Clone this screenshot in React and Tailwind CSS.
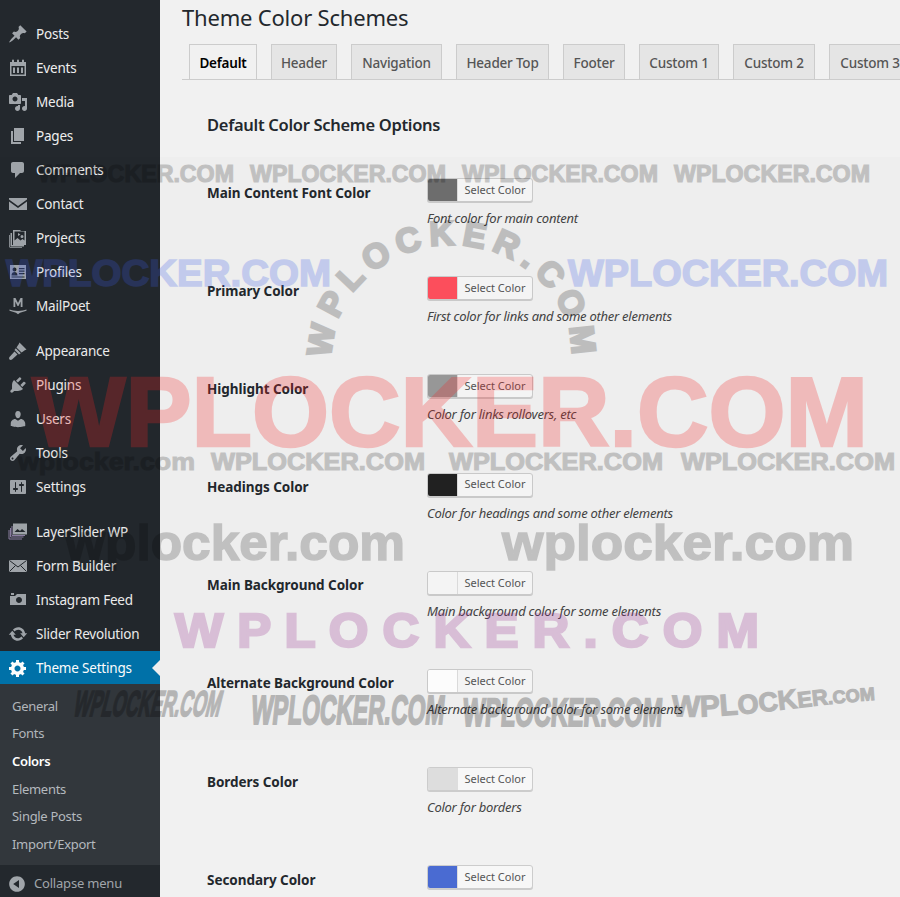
import React from "react";

const font = "font-['Noto_Sans','Open_Sans',sans-serif]";

const Icon = ({ children, className = "" }) => (
  <svg viewBox="0 0 20 20" className={`w-5 h-5 fill-current ${className}`}>
    {children}
  </svg>
);

const icons = {
  pin: <path d="M10.44 3.02l1.82-1.82 6.36 6.35-1.83 1.82c-1.05-.68-2.48-.57-3.41.36l-.75.75c-.92.93-1.04 2.35-.35 3.41l-1.83 1.82-2.41-2.41-2.8 2.79c-.42.42-3.38 2.71-3.8 2.29s1.86-3.39 2.28-3.81l2.79-2.79L4.1 9.36l1.83-1.82c1.05.69 2.48.57 3.4-.36l.75-.75c.93-.92 1.05-2.35.36-3.41z" />,
  calendar: (
    <path
      fillRule="evenodd"
      d="M2 4h2V2.500a1 1 0 0 1 2 0V4h3V2.500a1 1 0 0 1 2 0V4h3V2.500a1 1 0 0 1 2 0V4h2v14H2zm1.500 4v8.500h13V8zM5 9.500h2v5.500H5zm4 0h2v5.500H9zm4 0h2v5.500h-2z"
    />
  ),
  media: <path d="M13 11V4c0-.55-.45-1-1-1h-1.67L9 1H5L3.67 3H2c-.55 0-1 .45-1 1v7c0 .55.45 1 1 1h10c.55 0 1-.45 1-1zM7 4.5c1.38 0 2.5 1.12 2.5 2.5S8.38 9.5 7 9.5 4.5 8.38 4.5 7 5.62 4.5 7 4.5zM14 6h5v10.5c0 1.38-1.12 2.5-2.5 2.5S14 17.88 14 16.5s1.12-2.5 2.5-2.5c.17 0 .34.02.5.05V9h-3V6zm-4 8.05V13h2v3.5c0 1.38-1.12 2.5-2.5 2.5S7 17.88 7 16.5 8.12 14 9.5 14c.17 0 .34.02.5.05z" />,
  page: <path d="M6 15V2h10v13H6zm-1 1h8v2H3V5h2v11z" />,
  comment: <path d="M5 2h9c1.1 0 2 .9 2 2v7c0 1.1-.9 2-2 2h-2l-5 5v-5H5c-1.1 0-2-.9-2-2V4c0-1.1.9-2 2-2z" />,
  mail: <path d="M1 4h18v1.600L10 12 1 5.600zM1 7.600l9 6.400 9-6.400V16H1z" />,
  projects: (
    <path
      fillRule="evenodd"
      d="M5 2h7l1 1h5v14H5zm1.500 1.500v9l3-2.500 3 2.500 2-1.500 2 1.500v-9zM10 5l2.500 1.500L10 8zm4 2a1.500 1.500 0 1 1 0 3 1.500 1.500 0 0 1 0-3zM2.500 5H4v12h12v1.500H2.500zM1 7h.8v13H14v-.8H1z"
    />
  ),
  profile: (
    <path
      fillRule="evenodd"
      d="M2 3h16v14H2zm4.500 2.500a2 2 0 1 0 0 4 2 2 0 0 0 0-4zM3.500 13.500c0-2.500 1.500-3.500 3-3.500s3 1 3 3.500zM11 6v1.200h5.500V6zm0 2.500v1.200h5.500V8.500zM11 11v1.200h5.500V11zm-7.500 3.500v1h13v-1z"
    />
  ),
  mailpoet: (
    <>
      <path d="M5.500 2h2l2.500 5 2.500-5h2v9h-1.800V5.500L10.500 10h-1L7.300 5.500V11H5.500z" />
      <path d="M1.500 13.500c2 .6 5 1.500 8.500 1.500s6.500-.9 8.500-1.500v1.300l-6.500 2-2 1.500-2-1.500-6.500-2z" />
    </>
  ),
  brush: (
    <>
      <path d="M11.500 1.500L18.500 8.500C16 9.500 14.500 11 13.500 11.500L8.500 6.500C9 5.500 10.500 4 11.500 1.500z" />
      <path d="M7.800 7.200L12.800 12.200 11 13.500 6.500 9z" />
      <path d="M6.500 10.500L9.500 13.500 4 18.500C3 19.300 1.800 18.800 1.500 18.500S.700 17 1.500 16z" />
    </>
  ),
  plug: <path d="M13.11 4.360L9.870 7.600 8 5.730l3.240-3.240c.35-.34 1.050-.2 1.560.32.52.51.66 1.210.31 1.550zm-8 1.770l.91-1.120 9.010 9.010-1.190.84c-.71.71-2.630 1.160-3.820 1.160H6.140L4.900 17.260c-.59.59-1.540.59-2.120 0-.59-.58-.59-1.530 0-2.120l1.240-1.240v-3.880c0-1.130.4-3.190 1.090-3.890zm7.260 3.970l3.240-3.240c.34-.35 1.040-.21 1.550.31.52.51.66 1.210.31 1.550l-3.240 3.250z" />,
  user: <path d="M10 9.250c-2.270 0-2.730-3.440-2.730-3.440C7 4.020 7.820 2 9.970 2c2.160 0 2.980 2.020 2.710 3.810 0 0-.41 3.440-2.680 3.440zm0 2.570L12.720 10c2.390 0 4.520 2.330 4.520 4.530v2.490s-3.650 1.130-7.240 1.130c-3.650 0-7.240-1.130-7.240-1.130v-2.490c0-2.250 1.940-4.480 4.470-4.480z" />,
  wrench: <path d="M16.680 9.770c-1.340 1.340-3.300 1.670-4.950.99l-5.410 6.520c-.99.99-2.590.99-3.580 0s-.99-2.590 0-3.570l6.520-5.420c-.68-1.650-.35-3.610.99-4.950 1.280-1.280 3.120-1.620 4.720-1.060l-2.890 2.890 2.820 2.820 2.860-2.870c.53 1.580.18 3.390-1.080 4.650zM3.810 16.210c.4.39 1.040.39 1.430 0 .4-.4.4-1.040 0-1.430-.39-.4-1.030-.4-1.430 0-.39.39-.39 1.030 0 1.430z" />,
  sliders: <path d="M18 16V4c0-.55-.45-1-1-1H3c-.55 0-1 .45-1 1v12c0 .55.45 1 1 1h14c.55 0 1-.45 1-1zM8 11h1c.55 0 1 .45 1 1s-.45 1-1 1H8v1.500c0 .28-.22.5-.5.5s-.5-.22-.5-.5V13H6c-.55 0-1-.45-1-1s.45-1 1-1h1V5.500c0-.28.22-.5.5-.5s.5.22.5.5V11zm5-2h-1c-.55 0-1-.45-1-1s.45-1 1-1h1V5.500c0-.28.22-.5.5-.5s.5.22.5.5V7h1c.55 0 1 .45 1 1s-.45 1-1 1h-1v5.500c0 .28-.22.5-.5.5s-.5-.22-.5-.5V9z" />,
  layers: (
    <g fill="none" stroke="#8d7fa3" strokeWidth="1">
      <rect x="5.500" y="2" width="13" height="10" fill="#a0a5aa" stroke="#a0a5aa" />
      <path d="M4 4v9.500h13M2.500 6v9h13M1 8v9h13" />
      <path d="M6.500 10l3-3 2.500 2 2-2 3.500 3z" fill="#23282d" stroke="none" />
    </g>
  ),
  envelope: (
    <>
      <rect x="1" y="4" width="18" height="12" />
      <path d="M1.500 4.500L10 11l8.500-6.500M1.500 15.500l6-6M18.500 15.500l-6-6" fill="none" stroke="#23282d" strokeWidth="1" />
    </>
  ),
  camera: <path d="M6 5V3H3v2h3zm12 10V4H9L7 6H2v9h16zm-7-8c1.660 0 3 1.340 3 3s-1.340 3-3 3-3-1.340-3-3 1.340-3 3-3z" />,
  sync: <path d="M10.200 3.280c3.530 0 6.430 2.610 6.920 6h2.080l-3.500 4-3.500-4h2.320c-.45-1.970-2.210-3.450-4.320-3.450-1.450 0-2.730.71-3.540 1.780L4.950 5.660C6.230 4.200 8.110 3.280 10.200 3.280zm-.4 13.440c-3.520 0-6.430-2.610-6.920-6H.8l3.500-4c1.170 1.330 2.330 2.670 3.500 4H5.480c.45 1.970 2.210 3.450 4.320 3.450 1.450 0 2.730-.71 3.540-1.780l1.710 1.950c-1.280 1.460-3.150 2.380-5.250 2.380z" />,
  gear: <path d="M18 12h-2.180c-.17.7-.44 1.350-.81 1.930l1.540 1.540-2.100 2.100-1.540-1.540c-.58.36-1.230.63-1.910.79V19H8v-2.180c-.68-.16-1.330-.43-1.910-.79l-1.540 1.540-2.120-2.120 1.540-1.540c-.36-.58-.63-1.230-.79-1.910H1V9.030h2.170c.16-.7.44-1.350.8-1.940L2.430 5.550l2.100-2.100 1.540 1.540c.58-.37 1.240-.64 1.930-.81V2h3v2.180c.68.16 1.330.43 1.910.79l1.540-1.540 2.120 2.120-1.540 1.540c.36.59.64 1.240.8 1.940H18V12zm-8.500 1.500c1.660 0 3-1.340 3-3s-1.340-3-3-3-3 1.340-3 3 1.340 3 3 3z" />,
  collapse: <path d="M10 2.160c4.330 0 7.840 3.510 7.840 7.840s-3.510 7.840-7.840 7.840S2.160 14.330 2.160 10 5.710 2.160 10 2.160zm2 11.720V6.120L6.180 9.970z" />,
};

const menuGroups = [
  [
    ["Posts", "pin"],
    ["Events", "calendar"],
    ["Media", "media"],
    ["Pages", "page"],
    ["Comments", "comment"],
    ["Contact", "mail"],
    ["Projects", "projects"],
    ["Profiles", "profile"],
    ["MailPoet", "mailpoet"],
  ],
  [
    ["Appearance", "brush"],
    ["Plugins", "plug"],
    ["Users", "user"],
    ["Tools", "wrench"],
    ["Settings", "sliders"],
  ],
  [
    ["LayerSlider WP", "layers"],
    ["Form Builder", "envelope"],
    ["Instagram Feed", "camera"],
    ["Slider Revolution", "sync"],
  ],
];

const subMenu = ["General", "Fonts", "Colors", "Elements", "Single Posts", "Import/Export"];

const tabs = [
  ["Header", "w-[66px]"],
  ["Navigation", "w-[91px]"],
  ["Header Top", "w-[93px]"],
  ["Footer", "w-[62px]"],
  ["Custom 1", "w-[80px]"],
  ["Custom 2", "w-[82px]"],
  ["Custom 3", "w-[82px]"],
];

const options = [
  ["Main Content Font Color", "bg-[#6f6f6f]", "Font color for main content"],
  ["Primary Color", "bg-[#ff4f5e]", "First color for links and some other elements"],
  ["Highlight Color", "bg-[#999999]", "Color for links rollovers, etc"],
  ["Headings Color", "bg-[#222222]", "Color for headings and some other elements"],
  ["Main Background Color", "bg-[#f7f7f7]", "Main background color for some elements"],
  ["Alternate Background Color", "bg-white", "Alternate background color for some elements"],
  ["Borders Color", "bg-[#dddddd]", "Color for borders"],
  ["Secondary Color", "bg-[#4a6bd2]", ""],
];

const MenuItem = ({ label, icon }) => (
  <div className="flex items-center h-[34px] text-[13.5px] tracking-[-0.2px] text-[#eeeeee]">
    <div className="w-9 flex justify-center -mt-[1px] text-[#a0a5aa]">
      <Icon>{icons[icon]}</Icon>
    </div>
    <span>{label}</span>
  </div>
);

const Sidebar = () => (
  <aside className="w-40 shrink-0 h-full bg-[#23282d] flex flex-col pt-[17px]">
    {menuGroups.map((group, i) => (
      <div key={i} className="mb-[11px] shrink-0">
        {group.map(([label, icon]) => (
          <MenuItem key={label} label={label} icon={icon} />
        ))}
      </div>
    ))}
    <div className="-mt-[11px] shrink-0 relative flex items-center h-[33px] bg-[#0073aa] text-white text-[13.5px] tracking-[-0.2px]">
      <div className="w-9 flex justify-center">
        <Icon>{icons.gear}</Icon>
      </div>
      <span className="pt-[2px]">Theme Settings</span>
      <div className="absolute right-0 top-[9px] border-y-[8px] border-r-[8px] border-y-transparent border-r-[#f1f1f1]" />
    </div>
    <div className="bg-[#32373c] h-[181px] shrink-0 pt-[8.500px] flex flex-col">
      {subMenu.map((item) => (
        <div
          key={item}
          className={`h-[27.700px] shrink-0 flex items-center pl-3 text-[13px] tracking-[-0.3px] ${
            item === "Colors" ? "text-white font-semibold" : "text-[#b4b9be]"
          }`}
        >
          {item}
        </div>
      ))}
    </div>
    <div className="flex shrink-0 items-center h-[36px] pt-[1px] text-[13px] tracking-[-0.2px] text-[#a0a5aa]">
      <div className="w-[34px] flex justify-center">
        <Icon>{icons.collapse}</Icon>
      </div>
      <span>Collapse menu</span>
    </div>
  </aside>
);

const Tabs = () => (
  <div className="flex gap-[14px] h-9 mt-[10px] pl-[7px] border-b border-[#cccccc] overflow-hidden">
    <div className="w-[68px] h-9 shrink-0 flex items-center justify-center pt-[2px] bg-[#f1f1f1] border border-[#cccccc] border-b-[#f1f1f1] text-[13.5px] font-semibold tracking-[-0.2px] text-black">
      Default
    </div>
    {tabs.map(([label, width]) => (
      <div
        key={label}
        className={`${width} h-[35px] shrink-0 flex items-center justify-center pt-[2px] whitespace-nowrap bg-[#e5e5e5] border border-[#cccccc] border-b-0 text-[13.5px] font-medium tracking-[-0.2px] text-[#555555]`}
      >
        {label}
      </div>
    ))}
  </div>
);

const ColorOption = ({ label, swatch, desc }) => (
  <div className="flex h-[98.200px] pl-[25px]">
    <div className="w-[220px] shrink-0 pt-[4.500px] text-[13.5px] font-bold tracking-[-0.05px] text-[#23282d] leading-[20px] whitespace-nowrap">
      {label}
    </div>
    <div>
      <div className="flex w-[106px] h-6 bg-[#f7f7f7] border border-[#cccccc] rounded-[3px] shadow-[0_1px_0_#cccccc] overflow-hidden">
        <div className={`${swatch} w-[30px] shrink-0 border-r border-[#dddddd]`} />
        <div className="flex-1 flex items-center justify-center text-[11px] text-[#555555]">Select Color</div>
      </div>
      {desc && (
        <div className="mt-[6px] text-[13px] italic tracking-[-0.25px] text-[#444444] leading-[20px] whitespace-nowrap">
          {desc}
        </div>
      )}
    </div>
  </div>
);

const Mark = ({ x, y, w, size, fill, opacity, children, stroke = 0 }) => (
  <text
    x={x}
    y={y}
    fontSize={size}
    fill={fill}
    stroke={fill}
    strokeWidth={stroke}
    opacity={opacity}
    textLength={w}
    lengthAdjust="spacingAndGlyphs"
  >
    {children}
  </text>
);

// stock-site stamps that sit on top of the whole screenshot
const Watermarks = () => (
  <svg
    viewBox="0 0 900 897"
    className="absolute inset-0 w-[900px] h-[897px] pointer-events-none"
    fontFamily="'Liberation Sans', Arial, sans-serif"
    fontWeight="700"
  >
    <rect x="0" y="157" width="900" height="583" fill="#000000" opacity="0.012" />

    {[38, 250, 462, 674].map((x) => (
      <Mark key={x} x={x} y={182} w={196} size={23.500} fill="#000000" opacity={0.19} stroke={1.2}>
        WPLOCKER.COM
      </Mark>
    ))}

    <Mark x={6} y={286} w={325} size={36} fill="#3c5ce6" opacity={0.24} stroke={1.5}>WPLOCKER.COM</Mark>
    <Mark x={568} y={286} w={320} size={36} fill="#3c5ce6" opacity={0.24} stroke={1.5}>WPLOCKER.COM</Mark>

    <path id="wm-arc" d="M 332 358 A 120 110 0 0 1 572 352" fill="none" />
    <text fontSize="34" fill="#000000" stroke="#000000" strokeWidth="2.500" opacity="0.2" letterSpacing="7">
      <textPath href="#wm-arc">WPLOCKER.COM</textPath>
    </text>

    <Mark x={32} y={446} w={836} size={98} fill="#f52525" opacity={0.25} stroke={2.500}>WPLOCKER.COM</Mark>

    <Mark x={18} y={470} w={177} size={24} fill="#000000" opacity={0.19} stroke={1}>wplocker.com</Mark>
    {[211, 449, 681].map((x) => (
      <Mark key={x} x={x} y={470} w={214} size={24.500} fill="#000000" opacity={0.19} stroke={1.2}>
        WPLOCKER.COM
      </Mark>
    ))}

    <Mark x={65} y={560} w={340} size={50} fill="#000000" opacity={0.19} stroke={1.500}>wplocker.com</Mark>
    <Mark x={502} y={560} w={352} size={50} fill="#000000" opacity={0.19} stroke={1.500}>wplocker.com</Mark>

    <Mark x={175} y={647} w={584} size={48} fill="#96288c" opacity={0.24} stroke={2.500}>W P L O C K E R . C O M</Mark>

    <path id="wm-wave" d="M 672 716 C 730 720 800 705 876 700" fill="none" />
    <g opacity="0.24" fill="#000000" stroke="#000000" strokeWidth="1.200">
      <text transform="translate(72 716) skewX(-14) scale(0.78 1.500)" fontSize="24" textLength="188" lengthAdjust="spacingAndGlyphs">WPLOCKER.COM</text>
      <text transform="translate(250 724) skewX(-6) scale(0.78 1.700)" fontSize="24" textLength="248" lengthAdjust="spacingAndGlyphs">WPLOCKER.COM</text>
      <text transform="translate(462 726) skewX(-4) scale(0.78 1.650)" fontSize="24" textLength="256" lengthAdjust="spacingAndGlyphs">WPLOCKER.COM</text>
      <text>
        <textPath href="#wm-wave">
          <tspan fontSize="30">WPL</tspan>
          <tspan fontSize="27">OCK</tspan>
          <tspan fontSize="22">ER</tspan>
          <tspan fontSize="18">.COM</tspan>
        </textPath>
      </text>
    </g>
  </svg>
);

export default function App() {
  return (
    <div className={`relative flex w-[900px] h-[897px] overflow-hidden bg-[#f1f1f1] ${font}`}>
      <Sidebar />
      <main className="flex-1 min-w-0 pl-[22px]">
        <h1 className="h-[34px] text-[22px] leading-[34px] tracking-[-0.2px] text-[#23282d]">Theme Color Schemes</h1>
        <Tabs />
        <h2 className="mt-[33px] pl-[25px] h-6 text-[16.500px] leading-6 font-semibold tracking-[-0.3px] text-[#23282d]">
          Default Color Scheme Options
        </h2>
        <div className="mt-[41px]">
          {options.map(([label, swatch, desc]) => (
            <ColorOption key={label} label={label} swatch={swatch} desc={desc} />
          ))}
        </div>
      </main>
      <Watermarks />
    </div>
  );
}
